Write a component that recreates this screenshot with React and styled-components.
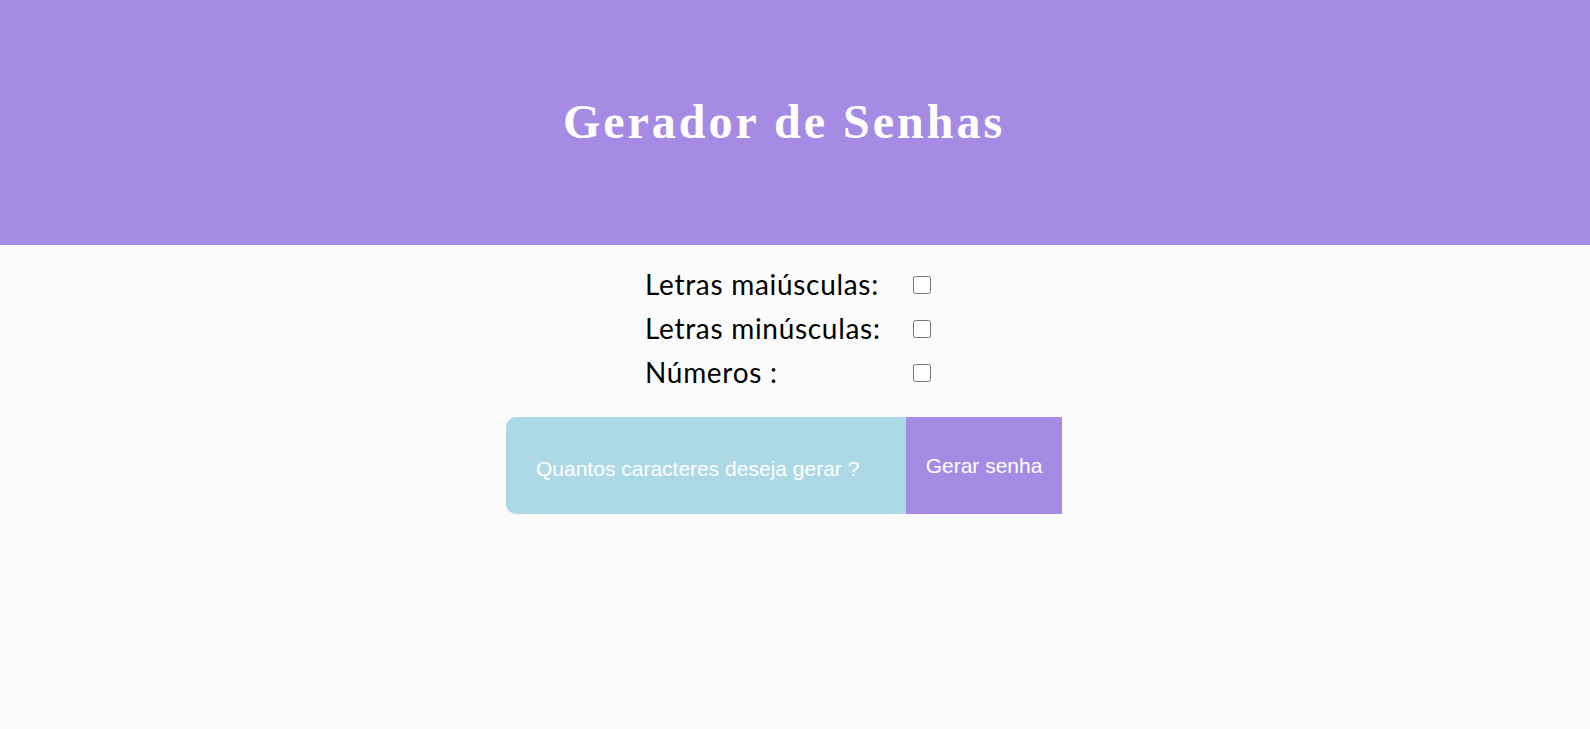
import React, { useState } from 'react'
import styled, { createGlobalStyle } from 'styled-components'

const GlobalStyle = createGlobalStyle`
  body {
    margin: 0;
    background-color: #fbfbfb;
    font-family: "Liberation Sans", Arial, sans-serif;
  }
`

function App() {
  const [opcoes, setOpcoes] = useState({ maiusculas: false, minusculas: false, numeros: false })

  const toggle = (chave) => {
    setOpcoes({ ...opcoes, [chave]: !opcoes[chave] })
  }

  return (
    <>
      <GlobalStyle />
      <Header>
        <h1>Gerador de Senhas</h1>
      </Header>
      <Main>
        <Options>
          <span>Letras maiúsculas:</span>
          <input type="checkbox" checked={opcoes.maiusculas} onChange={() => toggle('maiusculas')} />
          <span>Letras minúsculas:</span>
          <input type="checkbox" checked={opcoes.minusculas} onChange={() => toggle('minusculas')} />
          <span>Números :</span>
          <input type="checkbox" checked={opcoes.numeros} onChange={() => toggle('numeros')} />
        </Options>
        <Form onSubmit={(e) => e.preventDefault()}>
          <Input type="number" placeholder="Quantos caracteres deseja gerar ?" />
          <Button type="submit">Gerar senha</Button>
        </Form>
      </Main>
    </>
  )
}

export default App

const Header = styled.header`
  height: 245px;
  background-color: #a58be4;
  display: flex;
  align-items: center;
  justify-content: center;
  padding-right: 22px;
  h1 {
    margin: 0 0 3px 0;
    color: white;
    font-family: "Liberation Serif", "Times New Roman", serif;
    font-weight: bold;
    font-size: 48px;
    letter-spacing: 3px;
  }
`

const Main = styled.main`
  display: flex;
  flex-direction: column;
  align-items: center;
`

const Options = styled.div`
  margin: 18px 14px 0 0;
  display: grid;
  grid-template-columns: 268px auto;
  grid-auto-rows: 44px;
  align-items: center;
  span {
    font-family: Lato, "Noto Sans", sans-serif;
    font-size: 28px;
    letter-spacing: 0.7px;
    color: #000;
    padding-bottom: 3px;
  }
  input {
    margin: 0;
    width: 18px;
    height: 18px;
  }
`

const Form = styled.form`
  margin: 22px 22px 0 0;
  display: flex;
`

const Input = styled.input`
  width: 400px;
  height: 97px;
  box-sizing: border-box;
  padding: 6px 30px 0;
  border: none;
  outline: none;
  border-radius: 10px 0 0 10px;
  background-color: lightblue;
  color: white;
  font-family: "Liberation Sans", Arial, sans-serif;
  font-size: 21px;
  &::placeholder {
    color: white;
  }
  &::-webkit-inner-spin-button {
    display: none;
  }
`

const Button = styled.button`
  width: 156px;
  height: 97px;
  border: none;
  background-color: #a58be4;
  color: white;
  font-family: "Liberation Sans", Arial, sans-serif;
  font-size: 21px;
  cursor: pointer;
  padding: 0;
`
